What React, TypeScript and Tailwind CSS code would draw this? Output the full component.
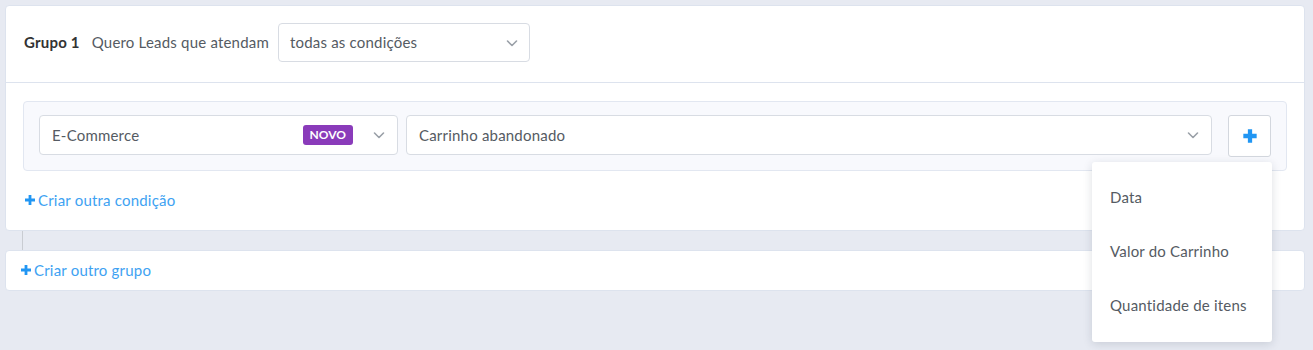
import React from "react";

const Chevron = () => (
  <svg width="14" height="14" viewBox="0 0 14 14" fill="none">
    <path d="M2.5 5L7 9.5L11.5 5" stroke="#9aa0a8" strokeWidth="1.6" strokeLinecap="round" strokeLinejoin="round" />
  </svg>
);

const Plus = ({ size = 12, color = "#2196f3", w = 3 }: { size?: number; color?: string; w?: number }) => (
  <svg width={size} height={size} viewBox="0 0 12 12" fill="none">
    <path d="M6 1V11M1 6H11" stroke={color} strokeWidth={w} strokeLinecap="butt" />
  </svg>
);

export default function App() {
  return (
    <div
      className="min-h-[350px] bg-[#e7eaf2] pt-[5px] pl-[5px] pr-[8px] text-[15px] tracking-[0.2px] text-[#555b63]"
      style={{ fontFamily: "Lato, 'Open Sans', sans-serif" }}
    >
      <div className="rounded-[4px] border border-[#dde3ee] bg-white">
        <div className="flex h-[77px] items-center border-b border-[#dde3ee] pb-[3px] pl-[18px]">
          <span className="font-bold text-[#333]">Grupo 1</span>
          <span className="ml-[12px] text-[#555b63]">Quero Leads que atendam</span>
          <div className="ml-[9px] flex h-[39px] w-[252px] items-center justify-between rounded-[4px] border border-[#d8dce3] pl-[11px] pr-[10px]">
            <span className="text-[#555b63]">todas as condições</span>
            <Chevron />
          </div>
        </div>
        <div className="px-[17px] pb-[18px] pt-[18px]">
          <div className="flex h-[70px] items-start gap-[8px] rounded-[4px] border border-[#e2e7f1] bg-[#f8f9fd] px-[15px] pt-[13px]">
            <div className="flex h-[40px] w-[359px] items-center rounded-[4px] border border-[#d8dce3] bg-white pl-[12px] pr-[11px]">
              <span className="flex-1 text-[#555b63]">E-Commerce</span>
              <span className="rounded-[3px] bg-[#8a3bba] px-[7px] py-[2px] text-[12px] font-bold leading-[16px] tracking-normal text-white">NOVO</span>
              <span className="ml-[19px] flex"><Chevron /></span>
            </div>
            <div className="flex h-[40px] flex-1 items-center justify-between rounded-[4px] border border-[#d8dce3] bg-white pl-[12px] pr-[11px]">
              <span className="text-[#555b63]">Carrinho abandonado</span>
              <Chevron />
            </div>
            <div className="relative ml-[8px]">
              <div className="flex h-[42px] w-[43px] items-center justify-center rounded-[3px] border border-[#d3d7de] bg-white">
                <Plus size={16} w={3.2} color="#2196f3" />
              </div>
              <div className="absolute right-[-1px] top-[47px] z-10 w-[180px] rounded-[3px] bg-white pb-[10px] pt-[8px] shadow-[0_2px_10px_rgba(30,40,60,0.15)]">
                {["Data", "Valor do Carrinho", "Quantidade de itens"].map((t) => (
                  <div key={t} className="flex h-[54px] items-center pl-[18px] text-[#555b63]">
                    {t}
                  </div>
                ))}
              </div>
            </div>
          </div>
          <div className="mt-[18px] flex items-center gap-[2px] pl-[1px] text-[#3ea2f2]">
            <Plus size={12} w={2.8} color="#2196f3" />
            <span>Criar outra condição</span>
          </div>
        </div>
      </div>
      <div className="ml-[17px] h-[19px] w-[1px] bg-[#c9ccd2]" />
      <div className="flex h-[41px] items-center gap-[2px] rounded-[4px] border border-[#dde3ee] bg-white pl-[14px] text-[#3ea2f2]">
        <Plus size={12} w={2.8} color="#2196f3" />
        <span>Criar outro grupo</span>
      </div>
    </div>
  );
}
